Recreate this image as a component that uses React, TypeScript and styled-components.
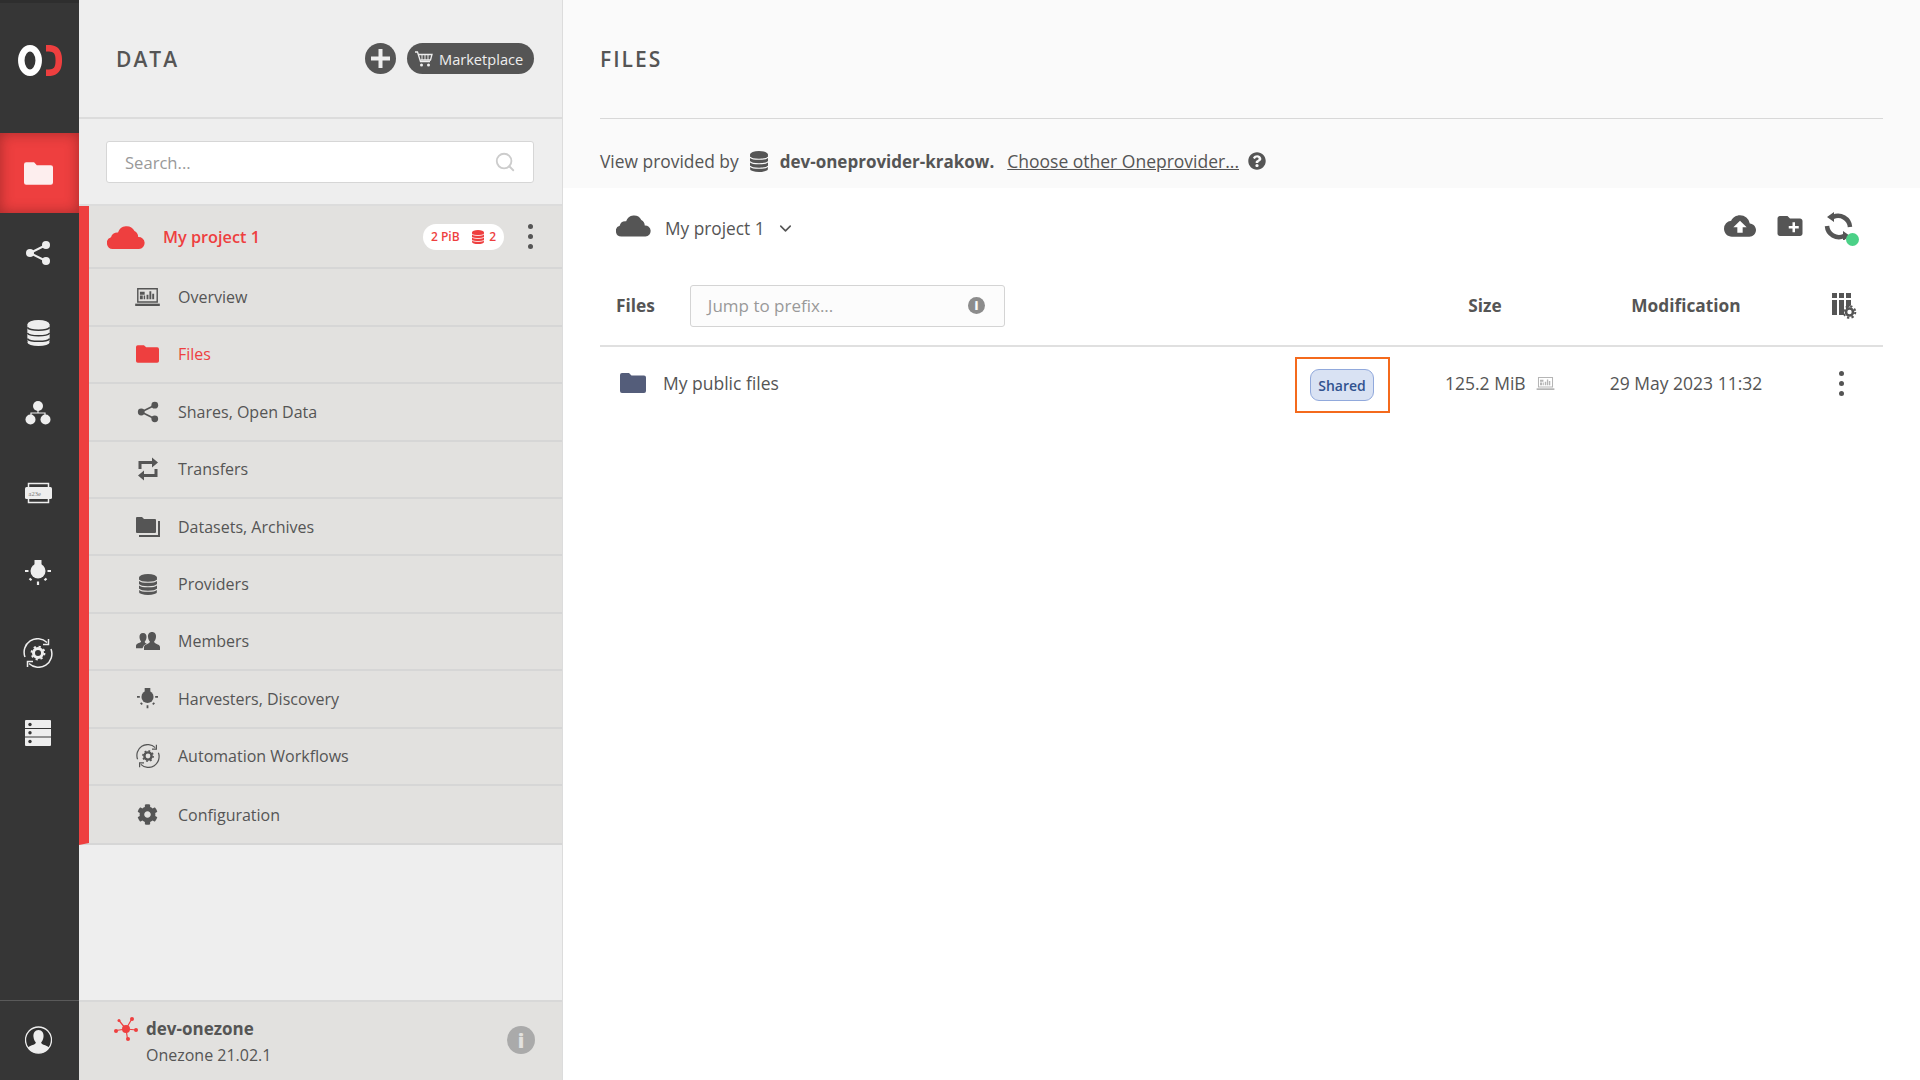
import React from 'react';
import styled, { createGlobalStyle } from 'styled-components';
import { FaCog, FaQuestionCircle } from 'react-icons/fa';
import { MdCloudUpload, MdCreateNewFolder } from 'react-icons/md';
import { ChevronDown, Search } from 'lucide-react';

const RED = '#ee3f3f';
const TEXT = '#555555';

const GlobalStyle = createGlobalStyle`
  html, body {
    margin: 0;
    padding: 0;
    height: 100%;
    overflow: hidden;
  }
  body {
    font-family: 'Open Sans', 'Liberation Sans', sans-serif;
    font-size: 16px;
    color: ${TEXT};
  }
  * {
    box-sizing: border-box;
  }
`;

const Page = styled.div`
  display: flex;
  width: 1920px;
  height: 1080px;
  background-color: #ffffff;
`;

const Rail = styled.nav`
  display: flex;
  flex-direction: column;
  width: 79px;
  height: 100%;
  flex-shrink: 0;
  background-color: #363636;
  border-top: 3px solid #2e2e2e;
`;

const LogoBox = styled.div`
  display: flex;
  justify-content: center;
  height: 130px;
  padding-top: 42px;
  flex-shrink: 0;
`;

const RailItem = styled.div<{ $active?: boolean }>`
  display: flex;
  align-items: center;
  justify-content: center;
  height: 80px;
  padding-right: 3px;
  flex-shrink: 0;
  color: #eeeeee;
  background-color: ${(p) => (p.$active ? RED : 'transparent')};
  box-shadow: ${(p) => (p.$active ? 'inset 0 0 14px rgba(80, 20, 20, 0.45)' : 'none')};
`;

const RailSpacer = styled.div`
  flex: 1;
`;

const RailFooter = styled.div`
  display: flex;
  align-items: center;
  justify-content: center;
  height: 80px;
  padding: 0 3px 2px 0;
  border-top: 1px solid #5a5a5a;
  color: #eeeeee;
`;

const SidePanel = styled.aside`
  display: flex;
  flex-direction: column;
  width: 484px;
  height: 100%;
  flex-shrink: 0;
  background-color: #eeeeee;
  border-right: 1px solid #dcdcdc;
`;

const SideHeader = styled.header`
  display: flex;
  align-items: center;
  height: 119px;
  padding: 0 28px 0 37px;
  border-bottom: 2px solid #dcdcdc;
`;

const SideTitle = styled.h1`
  flex: 1;
  margin: 0;
  font-size: 21px;
  font-weight: 600;
  letter-spacing: 2px;
  color: ${TEXT};
`;

const RoundButton = styled.div`
  display: flex;
  align-items: center;
  justify-content: center;
  width: 31px;
  height: 31px;
  border-radius: 50%;
  background-color: ${TEXT};
  margin-right: 11px;
`;

const MarketButton = styled.div`
  display: flex;
  align-items: center;
  gap: 6px;
  width: 127px;
  height: 31px;
  padding: 0 0 0 8px;
  border-radius: 16px;
  background-color: ${TEXT};
  color: #eeeeee;
  font-size: 14.6px;
`;

const SearchArea = styled.div`
  height: 87px;
  padding: 22px 28px 0 27px;
  border-bottom: 2px solid #dcdcdc;
`;

const SearchBox = styled.div`
  display: flex;
  align-items: center;
  justify-content: space-between;
  height: 42px;
  padding: 0 17px 0 18px;
  background-color: #ffffff;
  border: 1px solid #d6d6d6;
  border-radius: 3px;
  color: #999999;
  font-size: 16.6px;
`;

const SpaceBlock = styled.div`
  display: flex;
  flex-direction: column;
  background-color: #e2e1df;
  border-left: 10px solid ${RED};
  border-bottom: 2px solid #d6d6d6;
`;

const SpaceRow = styled.div`
  display: flex;
  align-items: center;
  height: 63.4px;
  padding: 0 28px 0 18px;
  border-bottom: 2px solid #d6d6d6;
`;

const SpaceName = styled.span`
  flex: 1;
  margin-left: 18px;
  color: ${RED};
  font-size: 16.3px;
  font-weight: 600;
`;

const SpaceStats = styled.div`
  display: flex;
  align-items: center;
  width: 81px;
  height: 26px;
  padding: 0 8px;
  border-radius: 13px;
  background-color: #ffffff;
  color: ${RED};
  font-size: 12px;
  font-weight: 600;
  justify-content: space-between;
  margin-right: 24px;
`;

const StatGroup = styled.span`
  display: flex;
  align-items: center;
  gap: 5px;
`;

const Dots = styled.div`
  display: flex;
  flex-direction: column;
  gap: 5px;
  width: 6px;
`;

const Dot = styled.span`
  width: 5px;
  height: 5px;
  border-radius: 50%;
  background-color: ${TEXT};
`;

const MenuItem = styled.div<{ $active?: boolean; $last?: boolean }>`
  display: flex;
  align-items: center;
  height: 57.4px;
  padding-left: 45px;
  color: ${(p) => (p.$active ? RED : TEXT)};
  border-bottom: ${(p) => (p.$last ? 'none' : '2px solid #d6d6d6')};
`;

const MenuIcon = styled.span`
  display: flex;
  align-items: center;
  justify-content: center;
  width: 27px;
  margin-right: 17px;
`;

const SideSpacer = styled.div`
  flex: 1;
`;

const ZoneFooter = styled.footer`
  display: flex;
  height: 80px;
  padding: 15px 27px 0 35px;
  background-color: #e2e1df;
  border-top: 2px solid #d8d8d8;
`;

const ZoneInfo = styled.div`
  flex: 1;
  margin-left: 8px;
`;

const ZoneName = styled.div`
  font-weight: 700;
  font-size: 17px;
  line-height: 24px;
`;

const ZoneVersion = styled.div`
  font-size: 16px;
  line-height: 29px;
`;

const ZoneInfoButton = styled.div`
  display: flex;
  align-items: center;
  justify-content: center;
  width: 28px;
  height: 28px;
  margin-top: 9px;
  border-radius: 50%;
  background-color: #aaaaaa;
  color: #e2e1df;
  font-weight: 800;
  font-size: 20px;
`;

const Main = styled.main`
  display: flex;
  flex-direction: column;
  flex: 1;
  min-width: 0;
`;

const MainTop = styled.div`
  height: 188px;
  padding: 0 37px 0 37px;
  background-color: #fafafa;
`;

const MainHeader = styled.header`
  display: flex;
  align-items: center;
  height: 119px;
  border-bottom: 1px solid #d8d8d8;
`;

const MainTitle = styled.h2`
  margin: 0;
  font-size: 21px;
  font-weight: 600;
  letter-spacing: 2px;
  color: ${TEXT};
`;

const ProviderLine = styled.div`
  display: flex;
  align-items: center;
  height: 69px;
  padding-top: 15px;
  font-size: 17.4px;
  color: ${TEXT};
`;

const ProviderIcon = styled.span`
  display: flex;
  margin-left: 11px;
`;

const ProviderName = styled.strong`
  font-weight: 700;
  font-size: 17px;
  margin: 0 13px 0 12px;
`;

const ProviderLink = styled.a`
  color: ${TEXT};
  text-decoration: underline;
  margin-right: 9px;
  font-size: 17.5px;
`;

const Browser = styled.section`
  padding: 0 37px 0 37px;
`;

const LocationRow = styled.div`
  display: flex;
  align-items: center;
  height: 80px;
  padding: 0 29px 0 16px;
`;

const LocationCloud = styled.span`
  display: flex;
  margin-bottom: 6px;
`;

const LocationName = styled.span`
  margin: 0 11px 0 14px;
  font-size: 17.3px;
`;

const LocationActions = styled.div`
  display: flex;
  align-items: center;
  margin-left: auto;
  margin-top: -4px;
  gap: 19px;
`;

const SyncWrap = styled.span`
  position: relative;
  display: flex;
`;

const SyncDot = styled.span`
  position: absolute;
  right: -5px;
  bottom: -6px;
  width: 13px;
  height: 13px;
  border-radius: 50%;
  background-color: #4bd187;
`;

const HeaderRow = styled.div`
  display: flex;
  align-items: center;
  height: 79px;
  padding-bottom: 2px;
  border-bottom: 2px solid #e0e0e0;
`;

const FileRow = styled.div`
  display: flex;
  align-items: center;
  height: 76px;
  padding-bottom: 4px;
  font-size: 17.5px;
`;

const NameCell = styled.div<{ $pad: number }>`
  display: flex;
  align-items: center;
  flex: 1;
  min-width: 0;
  padding-left: ${(p) => p.$pad}px;
`;

const HeaderLabel = styled.span`
  font-weight: 700;
  font-size: 17.3px;
`;

const PrefixBox = styled.div`
  display: flex;
  align-items: center;
  justify-content: space-between;
  width: 315px;
  height: 42px;
  margin-left: 35px;
  padding: 0 19px 0 17px;
  background-color: #fcfcfc;
  border: 1px solid #d4d4d4;
  border-radius: 3px;
  color: #999999;
  font-size: 17px;
`;

const SmallInfo = styled.span`
  display: flex;
  align-items: center;
  justify-content: center;
  width: 17px;
  height: 17px;
  border-radius: 50%;
  background-color: #8c8c8c;
  color: #fcfcfc;
  font-size: 12px;
  font-weight: 800;
`;

const SizeCell = styled.div<{ $head?: boolean }>`
  display: flex;
  align-items: center;
  justify-content: ${(p) => (p.$head ? 'center' : 'flex-start')};
  width: 190px;
  margin-right: 10px;
  padding-left: ${(p) => (p.$head ? 0 : 55)}px;
  gap: 10px;
`;

const DateCell = styled.div`
  width: 192px;
  text-align: center;
`;

const ActionCell = styled.div<{ $pad: number }>`
  display: flex;
  width: 101px;
  padding-left: ${(p) => p.$pad}px;
`;

const FileName = styled.span`
  margin-left: 17px;
  flex: 1;
`;

const HighlightBox = styled.div`
  display: flex;
  align-items: center;
  justify-content: center;
  width: 95px;
  height: 56px;
  margin-top: 4px;
  padding-right: 1px;
  border: 2px solid #f46a1c;
`;

const SharedTag = styled.span`
  display: flex;
  align-items: center;
  justify-content: center;
  width: 64px;
  height: 32px;
  border: 1px solid #91a9dc;
  border-radius: 9px;
  background-color: #d9e2f3;
  color: #31528f;
  font-size: 14px;
  font-weight: 600;
`;

const FolderIcon = ({ w, h, color }: { w: number; h: number; color: string }) => (
  <svg width={w} height={h} viewBox="0 0 26 20" fill={color}>
    <path d="M0 2a2 2 0 0 1 2-2h7l2.5 2.5H24a2 2 0 0 1 2 2V18a2 2 0 0 1-2 2H2a2 2 0 0 1-2-2z" />
  </svg>
);

const ShareIcon = ({ size }: { size: number }) => (
  <svg width={size} height={size} viewBox="0 0 26 26" fill="currentColor" stroke="currentColor">
    <path d="M21 5 5 13l16 8" fill="none" strokeWidth="2" />
    <circle cx="21" cy="5" r="4" stroke="none" />
    <circle cx="5" cy="13" r="4" stroke="none" />
    <circle cx="21" cy="21" r="4" stroke="none" />
  </svg>
);

const DbIcon = ({ w, h, gap }: { w: number; h: number; gap: string }) => (
  <svg width={w} height={h} viewBox="0 0 24 28" fill="currentColor">
    <rect x="0" y="3" width="24" height="22" rx="4" />
    <ellipse cx="12" cy="5" rx="12" ry="5" />
    <ellipse cx="12" cy="24" rx="12" ry="4" />
    <path d="M0 8c2 4 22 4 24 0M0 14c2 4 22 4 24 0M0 20c2 4 22 4 24 0" fill="none" stroke={gap} strokeWidth="1.6" />
  </svg>
);

const GroupsIcon = () => (
  <svg width="26" height="26" viewBox="0 0 26 26" fill="currentColor" stroke="currentColor">
    <path d="M6 18v-5h14v5M13 8v5" fill="none" strokeWidth="1.2" />
    <circle cx="13" cy="6" r="5" stroke="none" />
    <circle cx="5.5" cy="19.5" r="5" stroke="none" />
    <circle cx="20.5" cy="19.5" r="5" stroke="none" />
  </svg>
);

const TokenIcon = () => (
  <svg width="27" height="22" viewBox="0 0 27 22" fill="none" stroke="currentColor">
    <path d="M3.5 5V1.5h20V5M3.5 17v3.5h20V17" strokeWidth="1.5" />
    <rect x="0" y="5" width="27" height="12" rx="1.5" fill="currentColor" stroke="none" />
    <text x="3.5" y="13.5" fontSize="6.5" fontFamily="'Liberation Serif', serif" fill="#777777" stroke="none">
      a23e
    </text>
  </svg>
);

const BulbIcon = ({ size }: { size: number }) => (
  <svg width={size} height={size} viewBox="0 0 26 26" fill="currentColor" stroke="currentColor">
    <rect x="9.5" y="0" width="7" height="6" stroke="none" />
    <circle cx="13" cy="11" r="7.5" stroke="none" />
    <path d="M0 11h3.5M22.5 11H26M13 21.5V25M4.5 18.5l2 1.8M21.5 18.5l-2 1.8" strokeWidth="2.2" fill="none" />
  </svg>
);

const AutomationIcon = ({ size }: { size: number }) => (
  <svg width={size} height={size} viewBox="0 0 30 30" fill="none" stroke="currentColor">
    <path d="M2 19A13.5 13.5 0 0 1 24 4.5" strokeWidth="1.5" />
    <path d="M28 11A13.5 13.5 0 0 1 6 25.5" strokeWidth="1.5" />
    <path d="M25.5 1v5.5H20M4.5 29v-5.5H10" strokeWidth="1.5" />
    <circle cx="15" cy="15" r="4.5" strokeWidth="3" />
    <circle cx="15" cy="15" r="6.4" strokeWidth="2" strokeDasharray="2.2 2.8" />
  </svg>
);

const ClustersIcon = () => (
  <svg width="26" height="26" viewBox="0 0 26 26" fill="currentColor">
    <path d="M1 0h24a1 1 0 0 1 1 1v7H0V1a1 1 0 0 1 1-1zM0 9h26v7.5H0zM0 17.5h26V25a1 1 0 0 1-1 1H1a1 1 0 0 1-1-1z" />
    <circle cx="5" cy="4.5" r="1.7" fill="#363636" />
    <circle cx="5" cy="12.8" r="1.7" fill="#363636" />
    <circle cx="5" cy="21.5" r="1.7" fill="#363636" />
  </svg>
);

const CloudIcon = ({ w, h, color }: { w: number; h: number; color: string }) => (
  <svg width={w} height={h} viewBox="0 0 38 25" fill={color}>
    <path d="M6 25a6 6 0 0 1-2-11.7A6.5 6.5 0 0 1 11 8.5 9 9 0 0 1 27.5 7a7 7 0 0 1 3.7 6A6 6 0 0 1 32 25z" />
  </svg>
);

const LaptopChartIcon = ({ w, h, color }: { w: number; h: number; color: string }) => (
  <svg width={w} height={h} viewBox="0 0 26 19" fill={color}>
    <path d="M2 0h22v15.5H2zM3.5 1.5V14h19V1.5z" fillRule="evenodd" />
    <path d="M0 16.5h26V19H0z" />
    <path d="M5 4h5v3H5zM5 8h3v4H5zM9 8h1.5v4H9zM12 7h2v5h-2zM15 3.5h2V12h-2zM18 6h2v6h-2z" />
  </svg>
);

const TransfersIcon = () => (
  <svg width="20" height="24" viewBox="0 0 20 24" fill="currentColor" stroke="currentColor">
    <path d="M2 12V5.5H14M18 12v6.5H6" fill="none" strokeWidth="3" />
    <path d="M14 .5v10l6-5zM6 13.5v10l-6-5z" stroke="none" />
  </svg>
);

const DatasetsIcon = () => (
  <svg width="24" height="21" viewBox="0 0 24 21" fill="currentColor">
    <path d="M0 2a1 1 0 0 1 1-1h5l2 2h11a1 1 0 0 1 1 1v12a1 1 0 0 1-1 1H1a1 1 0 0 1-1-1z" />
    <path d="M22 5h2v16H3v-2h19z" />
  </svg>
);

const MembersIcon = () => (
  <svg width="24" height="18" viewBox="0 0 24 18" fill="currentColor">
    <path d="M7 1c2.5 0 3.8 2 3.5 4.5C10.3 7.5 9.5 9 8.7 9.8c.2 1 .9 1.5 2 2l-2.700 1.500-1.500 3H0v-2.500c0-1.500 1.500-2.300 3.500-3 .9-.3 1.500-.9 1.600-1.600C4.300 8.800 3.700 7.300 3.500 5.500 3.200 3 4.500 1 7 1z" />
    <path d="M16 0c2.8 0 4.3 2.3 4 5-.2 2-1 3.700-1.900 4.600.1 1 .8 1.600 2.100 2.100 2.200.8 3.800 1.700 3.800 3.300V18H8v-3c0-1.600 1.600-2.500 3.800-3.300 1.300-.5 2-1.100 2.100-2.100C13 8.700 12.200 7 12 5c-.3-2.700 1.200-5 4-5z" />
  </svg>
);

const CartIcon = () => (
  <svg width="18" height="16" viewBox="0 0 18 16" fill="none" stroke="#eeeeee">
    <path d="M0 1h2.5l3 9.5h9.5" strokeWidth="1.3" />
    <path d="M3.5 3.5H17l-1.5 5.5H5.5" strokeWidth="1.3" />
    <path d="M7 4v5M10 4v5M13 4v5" strokeWidth="1" />
    <circle cx="6.5" cy="14" r="1.5" fill="#eeeeee" stroke="none" />
    <circle cx="13.5" cy="14" r="1.5" fill="#eeeeee" stroke="none" />
  </svg>
);

const ZoneIcon = () => (
  <svg width="24" height="24" viewBox="0 0 24 24" fill={RED} stroke={RED}>
    <path d="M12 12 17.5 2.5M12 12 2 13.5M12 12l1.5 10M12 12l10.5 1M12 12 5 3.5" strokeWidth="1.2" />
    <circle cx="12" cy="12" r="4" stroke="none" />
    <circle cx="18" cy="2" r="2" stroke="none" />
    <circle cx="5" cy="3.5" r="1.5" stroke="none" />
    <circle cx="2" cy="14" r="2" stroke="none" />
    <circle cx="14" cy="22" r="2" stroke="none" />
    <circle cx="22" cy="13" r="2" stroke="none" />
  </svg>
);

const AvatarIcon = () => (
  <svg width="27" height="30" viewBox="0 0 27 30">
    <circle cx="13.5" cy="15" r="13" fill="#2f2f2f" stroke="#eeeeee" strokeWidth="1.3" />
    <path d="M13.5 5c3.5 0 5.5 3 5 7-.3 2.5-1.3 4.3-2.3 5.3 0 1.2.8 1.9 2.3 2.5 2.3.8 4.500 1.500 5.700 2.700A13 13 0 0 1 13.500 28a13 13 0 0 1-10.700-5.500c1.200-1.200 3.400-1.900 5.700-2.700 1.500-.6 2.300-1.300 2.300-2.500-1-1-2-2.800-2.300-5.300-.5-4 1.500-7 5-7z" fill="#eeeeee" />
  </svg>
);

const SyncIcon = () => (
  <svg width="30" height="28" viewBox="0 0 30 28" fill={TEXT} stroke={TEXT}>
    <path d="M9 5A12 12 0 0 1 26 15M3 14A12 12 0 0 0 20 24" fill="none" strokeWidth="4.5" />
    <path d="M10 0v10L3 5zM19 19v10l7-5z" stroke="none" />
  </svg>
);

const ColumnsIcon = () => (
  <svg width="25" height="26" viewBox="0 0 25 26" fill={TEXT} stroke={TEXT}>
    <path d="M0 0h5v5H0zM7 0h5v5H7zM14 0h5v5h-5zM0 7h5v15H0zM7 7h5v15H7zM14 7h5v5l-5 5z" stroke="none" />
    <circle cx="17.5" cy="19" r="3.5" fill="none" strokeWidth="2.6" />
    <circle cx="17.5" cy="19" r="5.8" fill="none" strokeWidth="2" strokeDasharray="2.3 2.25" />
  </svg>
);

const menu = [
  { label: 'Overview', icon: <LaptopChartIcon w={25} h={18} color={TEXT} /> },
  { label: 'Files', active: true, icon: <FolderIcon w={23} h={18} color={RED} /> },
  { label: 'Shares, Open Data', icon: <ShareIcon size={22} /> },
  { label: 'Transfers', icon: <TransfersIcon /> },
  { label: 'Datasets, Archives', icon: <DatasetsIcon /> },
  { label: 'Providers', icon: <DbIcon w={18} h={21} gap="#e2e1df" /> },
  { label: 'Members', icon: <MembersIcon /> },
  { label: 'Harvesters, Discovery', icon: <BulbIcon size={21} /> },
  { label: 'Automation Workflows', icon: <AutomationIcon size={24} /> },
  { label: 'Configuration', icon: <FaCog size={21} /> },
];

const App: React.FC = () => {
  return (
    <Page>
      <GlobalStyle />
      <Rail>
        <LogoBox>
          <svg width="44" height="31" viewBox="0 0 44 31">
            <ellipse cx="12" cy="15.5" rx="8.7" ry="12.2" fill="none" stroke="#ffffff" strokeWidth="6.5" />
            <path d="M28 3.2h3c7 0 9.8 4 9.8 12.3S38 27.8 31 27.8h-3" fill="none" stroke={RED} strokeWidth="6.5" />
          </svg>
        </LogoBox>
        <RailItem $active>
          <FolderIcon w={29} h={23} color="#fdeeee" />
        </RailItem>
        <RailItem><ShareIcon size={26} /></RailItem>
        <RailItem><DbIcon w={23} h={26} gap="#363636" /></RailItem>
        <RailItem><GroupsIcon /></RailItem>
        <RailItem><TokenIcon /></RailItem>
        <RailItem><BulbIcon size={26} /></RailItem>
        <RailItem><AutomationIcon size={30} /></RailItem>
        <RailItem><ClustersIcon /></RailItem>
        <RailSpacer />
        <RailFooter><AvatarIcon /></RailFooter>
      </Rail>

      <SidePanel>
        <SideHeader>
          <SideTitle>DATA</SideTitle>
          <RoundButton>
            <svg width="19" height="19" viewBox="0 0 19 19" fill="#eeeeee">
              <path d="M7.5 0h4v7.5H19v4h-7.5V19h-4v-7.5H0v-4h7.5z" />
            </svg>
          </RoundButton>
          <MarketButton>
            <CartIcon />
            Marketplace
          </MarketButton>
        </SideHeader>

        <SearchArea>
          <SearchBox>
            Search...
            <Search size={22} color="#cccccc" />
          </SearchBox>
        </SearchArea>

        <SpaceBlock>
          <SpaceRow>
            <CloudIcon w={38} h={25} color={RED} />
            <SpaceName>My project 1</SpaceName>
            <SpaceStats>
              <span>2 PiB</span>
              <StatGroup>
                <DbIcon w={12} h={14} gap="#ffffff" />
                2
              </StatGroup>
            </SpaceStats>
            <Dots><Dot /><Dot /><Dot /></Dots>
          </SpaceRow>
          {menu.map((item, index) => (
            <MenuItem key={item.label} $active={item.active} $last={index === menu.length - 1}>
              <MenuIcon>{item.icon}</MenuIcon>
              {item.label}
            </MenuItem>
          ))}
        </SpaceBlock>

        <SideSpacer />

        <ZoneFooter>
          <ZoneIcon />
          <ZoneInfo>
            <ZoneName>dev-onezone</ZoneName>
            <ZoneVersion>Onezone 21.02.1</ZoneVersion>
          </ZoneInfo>
          <ZoneInfoButton>i</ZoneInfoButton>
        </ZoneFooter>
      </SidePanel>

      <Main>
        <MainTop>
          <MainHeader>
            <MainTitle>FILES</MainTitle>
          </MainHeader>
          <ProviderLine>
            <span>View provided by</span>
            <ProviderIcon>
              <DbIcon w={18} h={21} gap="#fafafa" />
            </ProviderIcon>
            <ProviderName>dev-oneprovider-krakow.</ProviderName>
            <ProviderLink>Choose other Oneprovider...</ProviderLink>
            <FaQuestionCircle size={18} color={TEXT} />
          </ProviderLine>
        </MainTop>

        <Browser>
          <LocationRow>
            <LocationCloud>
              <CloudIcon w={35} h={24} color={TEXT} />
            </LocationCloud>
            <LocationName>My project 1</LocationName>
            <ChevronDown size={19} color={TEXT} />
            <LocationActions>
              <MdCloudUpload size={32} color={TEXT} />
              <MdCreateNewFolder size={30} color={TEXT} />
              <SyncWrap>
                <SyncIcon />
                <SyncDot />
              </SyncWrap>
            </LocationActions>
          </LocationRow>

          <HeaderRow>
            <NameCell $pad={16}>
              <HeaderLabel>Files</HeaderLabel>
              <PrefixBox>
                Jump to prefix...
                <SmallInfo>i</SmallInfo>
              </PrefixBox>
            </NameCell>
            <SizeCell $head><HeaderLabel>Size</HeaderLabel></SizeCell>
            <DateCell><HeaderLabel>Modification</HeaderLabel></DateCell>
            <ActionCell $pad={50}><ColumnsIcon /></ActionCell>
          </HeaderRow>

          <FileRow>
            <NameCell $pad={20}>
              <FolderIcon w={26} h={20} color="#545d7a" />
              <FileName>My public files</FileName>
              <HighlightBox>
                <SharedTag>Shared</SharedTag>
              </HighlightBox>
            </NameCell>
            <SizeCell>
              125.2 MiB
              <LaptopChartIcon w={19} h={13} color="#b5b5b5" />
            </SizeCell>
            <DateCell>29 May 2023 11:32</DateCell>
            <ActionCell $pad={57}>
              <Dots><Dot /><Dot /><Dot /></Dots>
            </ActionCell>
          </FileRow>
        </Browser>
      </Main>
    </Page>
  );
};

export default App;
